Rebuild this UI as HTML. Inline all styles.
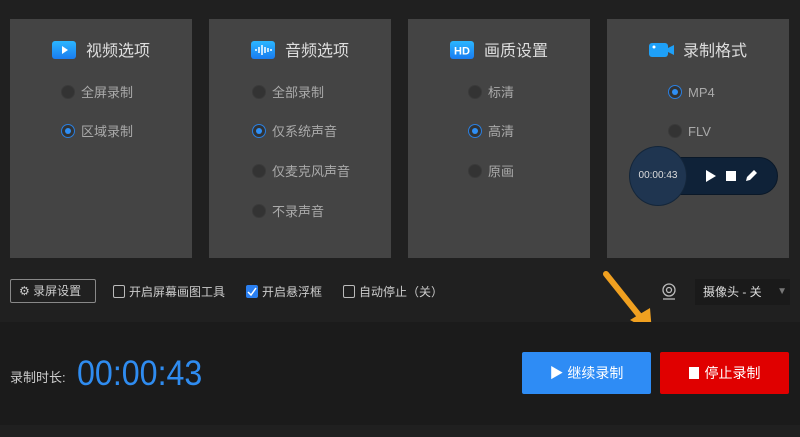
<!DOCTYPE html>
<html><head><meta charset="utf-8"><style>
*{margin:0;padding:0;box-sizing:border-box}
body{width:800px;height:437px;background:#202020;font-family:"Liberation Sans","Noto Sans CJK SC",sans-serif;position:relative;overflow:hidden;color:#bbb}
.p{position:absolute;top:19px;width:182px;height:239px;background:#444}
.t{position:absolute;top:21px;left:0;width:100%;text-align:center;font-size:16px;color:#ddd;line-height:24px}
.t i{font-style:normal;display:inline-block;width:24px;height:18px;vertical-align:-3px;margin-right:10px;border-radius:3px;background:linear-gradient(#2bb6ff,#1a7cf0);position:relative}
.r{position:absolute;font-size:13px;color:#aaa;line-height:16px;white-space:nowrap}
.r b{display:inline-block;width:14px;height:14px;border-radius:50%;background:#333;border:1px solid #3a3a3a;vertical-align:-2px;margin-right:6px;position:relative}
.r b.on{border:1px solid #2a7fe0;background:#333}
.r b.on:after{content:"";position:absolute;left:3px;top:3px;width:6px;height:6px;border-radius:50%;background:#2f8ff5}
.cb{position:absolute;top:285px;font-size:12px;color:#ccc;line-height:14px;white-space:nowrap}
.cb s{display:inline-block;width:12px;height:13px;border:1px solid #bbb;vertical-align:-2px;margin-right:4px;border-radius:2px}
</style></head><body>
<div class="p" style="left:10px"><div class="t"><i><svg width="24" height="18" style="position:absolute;left:0;top:0"><path d="M10 5l6 4-6 4z" fill="#fff"/></svg></i>视频选项</div>
<div class="r" style="left:51px;top:66px"><b></b>全屏录制</div>
<div class="r" style="left:51px;top:105px"><b class="on"></b>区域录制</div></div>
<div class="p" style="left:209px"><div class="t"><i><svg width="24" height="18" style="position:absolute;left:0;top:0" stroke="#fff" stroke-width="1.5"><path d="M5 8v2M8 6v6M11 4v10M14 6v6M17 7v4M20 8v2"/></svg></i>音频选项</div>
<div class="r" style="left:43px;top:66px"><b></b>全部录制</div>
<div class="r" style="left:43px;top:105px"><b class="on"></b>仅系统声音</div>
<div class="r" style="left:43px;top:145px"><b></b>仅麦克风声音</div>
<div class="r" style="left:43px;top:185px"><b></b>不录声音</div></div>
<div class="p" style="left:408px"><div class="t"><i><svg width="24" height="18" style="position:absolute;left:0;top:0"><text x="12" y="13.5" text-anchor="middle" font-size="11" font-weight="bold" font-style="normal" fill="#fff" font-family="Liberation Sans">HD</text></svg></i>画质设置</div>
<div class="r" style="left:60px;top:66px"><b></b>标清</div>
<div class="r" style="left:60px;top:105px"><b class="on"></b>高清</div>
<div class="r" style="left:60px;top:145px"><b></b>原画</div></div>
<div class="p" style="left:607px"><div class="t"><i style="background:none"><svg width="26" height="18" style="position:absolute;left:0;top:0"><rect x="0" y="2" width="19" height="14" rx="3" fill="#1ea0f8"/><path d="M19 7l6-3v10l-6-3z" fill="#1ea0f8"/><circle cx="5" cy="6" r="1.5" fill="#fff"/></svg></i>录制格式</div>
<div class="r" style="left:61px;top:66px"><b class="on"></b>MP4</div>
<div class="r" style="left:61px;top:105px"><b></b>FLV</div></div>
<div style="position:absolute;left:655px;top:157px;width:123px;height:38px;border-radius:19px;background:#0f2238;border:1px solid #0a1828"></div>
<div style="position:absolute;left:629px;top:146px;width:58px;height:60px;border-radius:50%;background:#1f3550;border:1px solid #14263a;color:#ddd;font-size:10px;text-align:center;line-height:58px">00:00:43</div>
<svg style="position:absolute;left:703px;top:168px" width="60" height="16"><path d="M3 2l10 6-10 6z" fill="#fff"/><rect x="23" y="3" width="10" height="10" fill="#fff"/><path d="M43 13l1-4 7-7 3 3-7 7z" fill="#fff"/></svg>
<div style="position:absolute;left:10px;top:279px;width:86px;height:24px;border:1px solid #888;border-radius:2px;font-size:12px;color:#ccc;line-height:22px;padding-left:8px"><span style="font-size:12px">⚙</span> 录屏设置</div>
<div class="cb" style="left:113px"><s></s>开启屏幕画图工具</div>
<div class="cb" style="left:246px"><s style="background:#2a7ff0;border-color:#2a7ff0;position:relative"><svg width="12" height="12" style="position:absolute;left:-1px;top:0"><path d="M2 6l3 3 5-7" stroke="#fff" stroke-width="1.5" fill="none"/></svg></s>开启悬浮框</div>
<div class="cb" style="left:343px"><s></s>自动停止（关）</div>
<svg style="position:absolute;left:660px;top:282px" width="18" height="20" stroke="#bbb" fill="none" stroke-width="1.3"><circle cx="9" cy="8" r="6"/><circle cx="9" cy="8" r="2.5"/><path d="M3 17h12"/></svg>
<div style="position:absolute;left:695px;top:279px;width:95px;height:26px;background:#1a1a1a;font-size:12px;color:#ddd;line-height:26px;padding-left:8px">摄像头 - 关<span style="position:absolute;right:3px;top:0;color:#777;font-size:10px">▼</span></div>
<svg style="position:absolute;left:598px;top:268px" width="60" height="66"><path d="M8 6l40 50" stroke="#f0a020" stroke-width="6" stroke-linecap="round"/><path d="M32 52l22 12-2-24z" fill="#f0a020"/></svg>
<div style="position:absolute;left:0;top:322px;width:800px;height:103px;background:#1b1b1b"></div>
<div style="position:absolute;left:10px;top:367px;font-size:13px;color:#ccc">录制时长:</div>
<div style="position:absolute;left:77px;top:354px;font-size:35px;color:#2f8cf0;line-height:40px;transform:scaleX(.92);transform-origin:left">00:00:43</div>
<div style="position:absolute;left:522px;top:352px;width:129px;height:42px;background:#2e8cf5;border-radius:2px;color:#fff;font-size:14px;text-align:center;line-height:42px">▶ 继续录制</div>
<div style="position:absolute;left:660px;top:352px;width:129px;height:42px;background:#e00000;border-radius:2px;color:#fff;font-size:14px;text-align:center;line-height:42px"><span style="display:inline-block;width:10px;height:12px;background:#fff;vertical-align:-1px;margin-right:6px"></span>停止录制</div>
</body></html>
